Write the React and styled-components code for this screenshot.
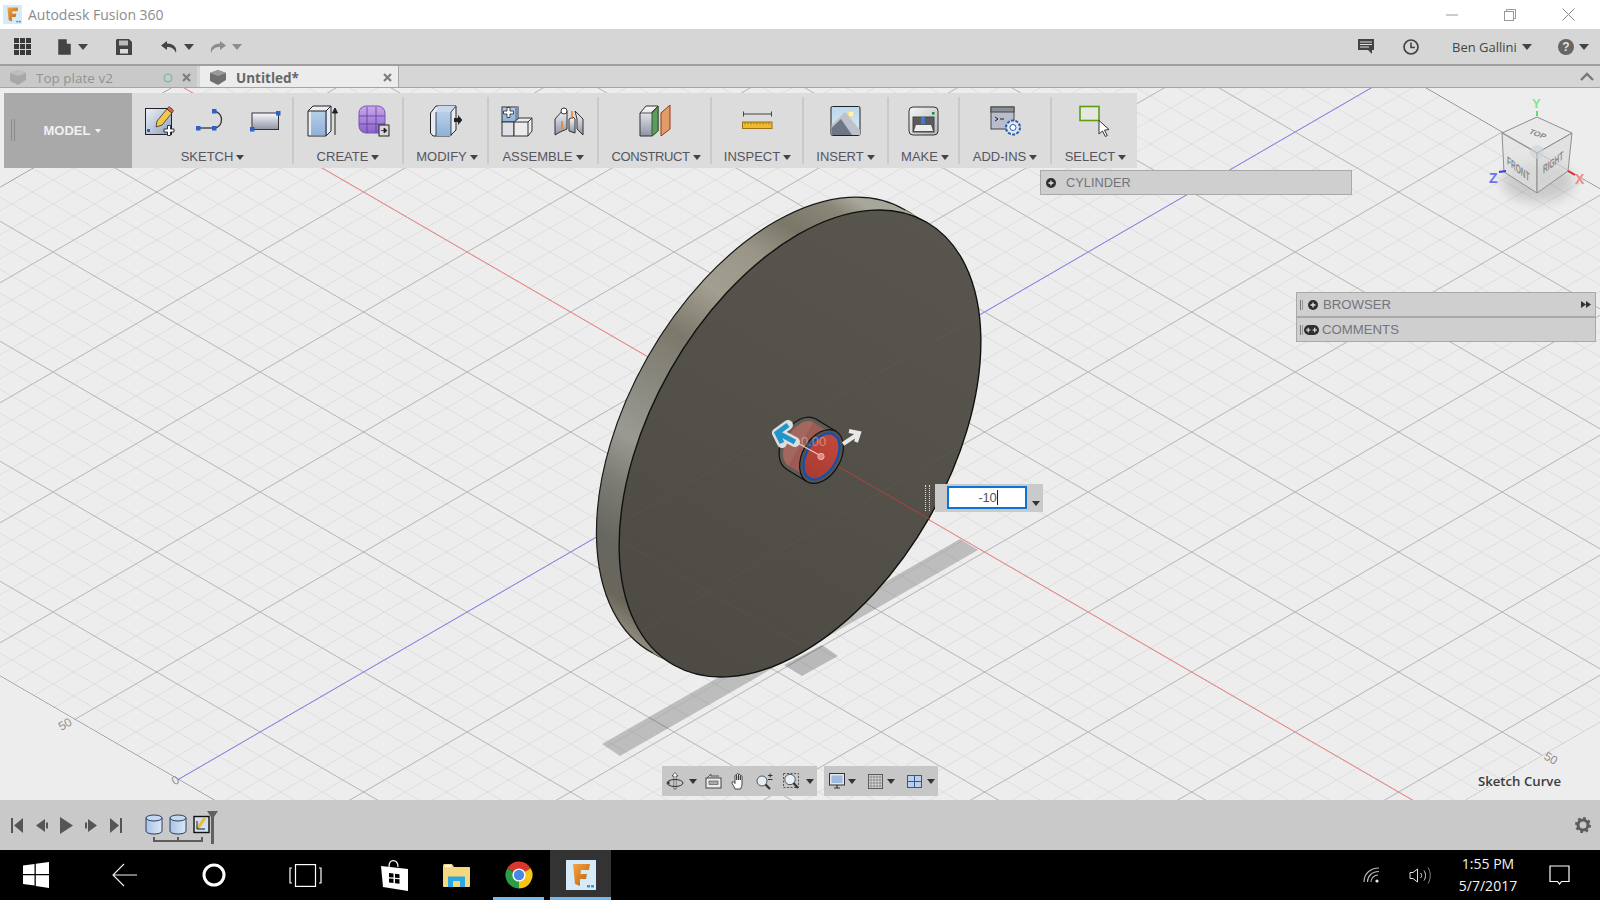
import React from "react";
import styled, { createGlobalStyle } from "styled-components";

const GlobalStyle = createGlobalStyle`
  html, body { margin: 0; padding: 0; background: #000; overflow: hidden; }
  #root { width: 1600px; height: 900px; }
`;

const UI_FONT = `"Open Sans", "Noto Sans", sans-serif`;
const ARIAL = `"Liberation Sans", Arial, sans-serif`;

const Page = styled.div`
  width: 1600px;
  height: 900px;
  display: flex;
  flex-direction: column;
  font-family: ${ARIAL};
`;

/* ---------- title bar ---------- */
const TitleBar = styled.div`
  height: 29px;
  background: #fff;
  display: flex;
  align-items: center;
  padding-left: 3px;
`;
const TitleText = styled.span`
  margin-left: 6px;
  font-family: ${UI_FONT};
  font-size: 14px;
  color: #8c8c8c;
`;
const WindowButtons = styled.div`
  margin-left: auto;
  display: flex;
  margin-right: 3px;
`;
const WindowButton = styled.div`
  width: 58px;
  height: 29px;
  display: flex;
  align-items: center;
  justify-content: center;
`;

/* ---------- menu bar ---------- */
const MenuBar = styled.div`
  height: 35px;
  background: #d6d6d6;
  border-bottom: 2px solid #9f9f9f;
  display: flex;
  align-items: center;
  padding-left: 14px;
`;
const MenuSlot = styled.div`
  display: flex;
  align-items: center;
  gap: ${(p) => p.$gap || 0}px;
  margin-left: ${(p) => p.$left || 0}px;
`;
const UserName = styled.span`
  font-family: ${UI_FONT};
  font-size: 13px;
  color: #444;
`;
const Caret = styled.span`
  display: inline-block;
  width: 0;
  height: 0;
  border-left: ${(p) => p.$size || 4}px solid transparent;
  border-right: ${(p) => p.$size || 4}px solid transparent;
  border-top: ${(p) => (p.$size || 4) + 1}px solid ${(p) => p.$color || "#444"};
`;

/* ---------- tabs ---------- */
const TabBar = styled.div`
  height: 22px;
  background: #d6d6d6;
  border-bottom: 1px solid #a5a5a5;
  box-sizing: border-box;
  display: flex;
  align-items: stretch;
`;
const Tab = styled.div`
  width: ${(p) => p.$width}px;
  margin-left: ${(p) => p.$left || 0}px;
  box-sizing: border-box;
  padding-left: 10px;
  padding-right: 6px;
  padding-top: 2px;
  display: flex;
  align-items: center;
  background: ${(p) => (p.$active ? "#ececec" : "#c9c9c9")};
  border-right: ${(p) => (p.$active ? "1px solid #a5a5a5" : "none")};
`;
const TabTitle = styled.span`
  margin-left: 10px;
  font-family: ${UI_FONT};
  font-size: 13.5px;
  font-weight: ${(p) => (p.$active ? 700 : 400)};
  color: ${(p) => (p.$active ? "#666" : "#929292")};
`;
const TabEnd = styled.div`
  margin-left: auto;
  display: flex;
  align-items: center;
  gap: 9px;
`;
const TabBarChevron = styled.div`
  margin-left: auto;
  width: 20px;
  display: flex;
  align-items: center;
`;

/* ---------- canvas + overlays ---------- */
const Canvas = styled.div`
  position: relative;
  height: 712px;
  background: #ededed;
  overflow: hidden;
`;
const Scene = styled.svg`
  display: block;
`;
const Ribbon = styled.div`
  position: absolute;
  left: 4px;
  top: 5px;
  height: 75px;
  display: flex;
  background: #dcdcdc;
`;
const ModelButton = styled.div`
  position: relative;
  width: 128px;
  background: #a9a9a9;
  display: flex;
  align-items: center;
  justify-content: center;
  gap: 5px;
  padding-left: 9px;
  box-sizing: border-box;
  font-size: 13px;
  font-weight: 700;
  color: #f1f1f1;
`;
const Grip = styled.span`
  position: absolute;
  left: 7px;
  top: 26px;
  width: 2px;
  height: 22px;
  border-left: 1px solid #8b8b8b;
  border-right: 1px solid #8b8b8b;
`;
const Group = styled.div`
  position: relative;
  width: ${(p) => p.$width}px;
  padding-top: 10px;
  box-sizing: border-box;
  display: flex;
  flex-direction: column;
  align-items: center;
  &::after {
    content: "";
    display: ${(p) => (p.$last ? "none" : "block")};
    position: absolute;
    right: -1px;
    top: 4px;
    bottom: 4px;
    width: 2px;
    background: #c9c9c9;
  }
`;
const GroupIcons = styled.div`
  height: 36px;
  display: flex;
  align-items: center;
  gap: ${(p) => p.$gap || 20}px;
  margin-bottom: 10px;
`;
const GroupLabel = styled.div`
  display: flex;
  align-items: center;
  gap: 3px;
  margin-left: ${(p) => p.$shift || 0}px;
  font-size: 13px;
  line-height: 16px;
  letter-spacing: ${(p) => (p.$tight ? "-0.4px" : "0")};
  color: #55555f;
`;
const PanelRow = styled.div`
  box-sizing: border-box;
  height: 25px;
  background: #cfcfcf;
  border: 1px solid #a9a9a9;
  display: flex;
  align-items: center;
  font-size: 13.2px;
  color: #74747c;
`;
const CylinderPanel = styled(PanelRow)`
  position: absolute;
  left: 1040px;
  top: 82px;
  width: 312px;
  padding-left: 5px;
  gap: 10px;
  font-size: 12.8px;
`;
const SidePanels = styled.div`
  position: absolute;
  left: 1296px;
  top: 204px;
  width: 300px;
  display: flex;
  flex-direction: column;
`;
const SideRow = styled(PanelRow)`
  padding-left: 2px;
  gap: ${(p) => p.$gap}px;
`;
const SideGrip = styled.span`
  width: 1px;
  height: 10px;
  margin-left: 1px;
  border-left: 1px solid #777;
  border-right: 1px solid #999;
`;
const DimensionBox = styled.div`
  position: absolute;
  left: 935px;
  top: 396px;
  width: 108px;
  height: 28px;
  box-sizing: border-box;
  padding: 2px 0 0 12px;
  background: #cacaca;
  display: flex;
  align-items: flex-start;
`;
const DimensionGrip = styled.div`
  position: absolute;
  left: 925px;
  top: 397px;
  width: 3px;
  height: 26px;
  border-left: 1px dotted #ddd;
  border-right: 1px dotted #ddd;
`;
const DimensionInput = styled.div`
  width: 80px;
  height: 23px;
  box-sizing: border-box;
  background: #fff;
  border: 2px solid #0b74d4;
  font-size: 13px;
  line-height: 19px;
  letter-spacing: -0.3px;
  color: #555;
  text-align: center;
  padding-left: 3px;
`;
const TextCaret = styled.span`
  display: inline-block;
  width: 1px;
  height: 15px;
  margin-left: 1px;
  vertical-align: -3px;
  background: #222;
`;
const DimensionCaret = styled.div`
  margin: 6px 0 0 5px;
`;
const NavStrip = styled.div`
  position: absolute;
  left: 662px;
  top: 678px;
  display: flex;
  gap: 7px;
`;
const NavGroup = styled.div`
  height: 30px;
  width: ${(p) => p.$width}px;
  background: #c7c7c7;
  display: flex;
  align-items: center;
`;
const NavItem = styled.div`
  display: flex;
  margin-left: ${(p) => p.$left}px;
`;
const HintText = styled.div`
  position: absolute;
  right: 39px;
  top: 684px;
  font-family: ${UI_FONT};
  font-size: 13.2px;
  font-weight: 600;
  color: #3c3c3c;
`;

/* ---------- timeline ---------- */
const Timeline = styled.div`
  height: 50px;
  background: #c9c9c9;
  display: flex;
  align-items: center;
  padding-left: 10px;
`;
const Transport = styled.div`
  display: flex;
  align-items: center;
  gap: 11px;
`;
const TimelineSteps = styled.svg`
  margin-left: 22px;
  flex: none;
`;
const TimelineGear = styled.div`
  margin-left: auto;
  margin-right: 9px;
  display: flex;
`;

/* ---------- taskbar ---------- */
const Taskbar = styled.div`
  height: 50px;
  background: #000;
  display: flex;
  align-items: stretch;
  color: #fff;
`;
const TaskButton = styled.div`
  width: ${(p) => p.$width}px;
  margin-left: ${(p) => p.$left || 0}px;
  box-sizing: border-box;
  display: flex;
  align-items: center;
  justify-content: center;
  background: ${(p) => (p.$active ? "#333" : "transparent")};
  border-bottom: ${(p) => (p.$open ? "3px solid #76b9ed" : "none")};
  padding-top: ${(p) => (p.$open ? "3px" : "0")};
`;
const Tray = styled.div`
  margin-left: auto;
  display: flex;
  align-items: center;
`;
const Clock = styled.div`
  width: 92px;
  margin-left: 11px;
  margin-right: 15px;
  font-family: ${UI_FONT};
  font-size: 14px;
  line-height: 22px;
  text-align: center;
  color: #f2f2f2;
`;

/* ---------- grid data ---------- */
const SLOPE = 60 / 103.5;
const RED_A = -18.76;
const BLUE_B = 882.8;
const range = (from, to, step) => {
  const out = [];
  for (let v = from; v <= to; v += step) out.push(v);
  return out;
};
const aMinor = range(RED_A - 720, 676, 24);
const bMinor = range(BLUE_B - 720, 1650, 24);
const aMajor = range(RED_A - 600, 676, 120);
const bMajor = range(BLUE_B - 600, 1650, 120);

const ALine = ({ a, ...rest }) => <line x1={0} y1={a} x2={1600} y2={a + SLOPE * 1600} {...rest} />;
const BLine = ({ b, ...rest }) => <line x1={0} y1={b} x2={1600} y2={b - SLOPE * 1600} {...rest} />;

/* ---------- shared gradients ---------- */
const DefsHolder = styled.svg`
  position: absolute;
  width: 0;
  height: 0;
`;
const SharedDefs = () => (
  <DefsHolder>
    <defs>
      <linearGradient id="gBlue" x1="0" y1="0" x2="0" y2="1">
        <stop offset="0" stopColor="#b9cfe8" />
        <stop offset="1" stopColor="#8fb1d9" />
      </linearGradient>
      <linearGradient id="gSteel" x1="0" y1="0" x2="0" y2="1">
        <stop offset="0" stopColor="#fbfbfd" />
        <stop offset="1" stopColor="#8d93a5" />
      </linearGradient>
      <linearGradient id="gGrey" x1="0" y1="0" x2="1" y2="1">
        <stop offset="0" stopColor="#f5f5f5" />
        <stop offset="1" stopColor="#b4b8c0" />
      </linearGradient>
      <linearGradient id="gPurple" x1="0" y1="0" x2="0" y2="1">
        <stop offset="0" stopColor="#c9a8ec" />
        <stop offset="1" stopColor="#8a62c8" />
      </linearGradient>
      <linearGradient id="gSketch" x1="0" y1="0" x2="1" y2="1">
        <stop offset="0" stopColor="#eef1f6" />
        <stop offset="1" stopColor="#8ea0bf" />
      </linearGradient>
      <linearGradient id="gPhoto" x1="0" y1="0" x2="0" y2="1">
        <stop offset="0" stopColor="#bcd8ee" />
        <stop offset="1" stopColor="#dce9f3" />
      </linearGradient>
      <linearGradient id="gFlame" x1="0" y1="0" x2="1" y2="1">
        <stop offset="0" stopColor="#f6a63f" />
        <stop offset="1" stopColor="#b85d13" />
      </linearGradient>
      <linearGradient id="gCyl" x1="0" y1="0" x2="1" y2="0">
        <stop offset="0" stopColor="#a9c4e6" />
        <stop offset="1" stopColor="#dbe8f6" />
      </linearGradient>
    </defs>
  </DefsHolder>
);

/* ---------- ribbon icons ---------- */
const SketchIcon = () => (
  <svg width="32" height="32" viewBox="0 0 32 32">
    <rect x="1.5" y="3.5" width="26" height="26" fill="url(#gSketch)" stroke="#222" />
    <rect x="3" y="24" width="3" height="3" fill="#2b62c4" />
    <polygon points="13,16 23,4 28,8 18,20 12,22" fill="#f4c74a" stroke="#333" strokeWidth="0.8" />
    <polygon points="23,4 25,1.5 29.5,5.5 28,8" fill="#e96a4b" stroke="#333" strokeWidth="0.8" />
    <path d="M20 24h3.5v-3.5h3V24H30v3h-3.5v3.5h-3V27H20z" fill="#fff" stroke="#222" strokeWidth="0.9" />
  </svg>
);
const LineIcon = () => (
  <svg width="34" height="24" viewBox="0 0 34 24">
    <path d="M2 19H18" stroke="#333" strokeWidth="1.3" />
    <path d="M18 2.5C28 2.5 28 19 18 19" fill="none" stroke="#333" strokeWidth="1.3" />
    <rect x="0" y="17" width="4.5" height="4.5" fill="#2b62c4" />
    <rect x="16" y="17" width="4.5" height="4.5" fill="#2b62c4" />
    <rect x="16" y="0" width="4.5" height="4.5" fill="#2b62c4" />
  </svg>
);
const RectIcon = () => (
  <svg width="31" height="22" viewBox="0 0 31 22">
    <rect x="2" y="3" width="26.5" height="16.5" fill="url(#gSteel)" stroke="#333" />
    <rect x="0" y="17" width="4.5" height="4.5" fill="#2b62c4" />
    <rect x="26" y="1" width="4.5" height="4.5" fill="#2b62c4" />
  </svg>
);
const ExtrudeIcon = () => (
  <svg width="32" height="32" viewBox="0 0 32 32">
    <polygon points="1,6 6,1 24,1 24,26 19,31 1,31" fill="#e9edf3" stroke="#222" />
    <rect x="4" y="6" width="16" height="24" fill="url(#gBlue)" />
    <path d="M19 31V6M19 6L24 1M1 6H19" stroke="#222" fill="none" />
    <path d="M28 30V4M25.5 8L28 3l2.5 5z" stroke="#222" fill="#222" />
  </svg>
);
const FormIcon = () => (
  <svg width="32" height="32" viewBox="0 0 32 32">
    <rect x="1" y="1" width="26" height="27" rx="7" fill="url(#gPurple)" stroke="#7a55b4" />
    <path d="M1 11H27M1 19H27M9 2V28M18 2V28" stroke="#5e3d99" fill="none" strokeWidth="0.8" />
    <rect x="21" y="20" width="10" height="11" fill="#d8d8d8" stroke="#222" />
    <path d="M23 25.5H27M26 23l3 2.5L26 28z" stroke="#222" fill="#222" strokeWidth="0.8" />
  </svg>
);
const ModifyIcon = () => (
  <svg width="32" height="32" viewBox="0 0 32 32">
    <polygon points="0.5,8 6,1 26,1 26,25 20,31 3,31 0.5,28" fill="#e8ecf2" stroke="#222" />
    <polygon points="6,7 22,7 26,1 8,1" fill="#c9d8ec" />
    <rect x="6" y="7" width="15" height="24" fill="url(#gBlue)" />
    <path d="M6 7V31M21 31V7L26 1" stroke="#222" fill="none" strokeWidth="0.8" />
    <path d="M24 13h4v-3l4.5 5-4.5 5v-3h-4z" fill="#222" />
  </svg>
);
const AssembleIcon = () => (
  <svg width="32" height="32" viewBox="0 0 32 32">
    <rect x="1" y="2" width="16" height="15" fill="url(#gBlue)" stroke="#333" />
    <polygon points="14,2 17,2 17,17 14,17" fill="#6e8fc0" />
    <rect x="1" y="17" width="12" height="14" fill="#dde1e6" stroke="#333" />
    <polygon points="13,31 13,17 18,13 31,13 31,26 27,31" fill="#ececec" stroke="#333" />
    <path d="M13 17H27V31M27 17L31 13" stroke="#333" fill="none" />
    <path d="M2.5 6h3.5v-3.5h3V6h3.5v3H9v3.5H6V9H2.5z" fill="#fff" stroke="#333" strokeWidth="0.9" />
  </svg>
);
const JointIcon = () => (
  <svg width="32" height="32" viewBox="0 0 32 32">
    <polygon points="2,14 11,4 14,6 14,24 7,27 2,30" fill="url(#gSteel)" stroke="#333" />
    <circle cx="11" cy="6" r="3" fill="#fff" stroke="#333" />
    <polygon points="16,14 20,12 22,14 22,28 16,26" fill="url(#gSteel)" stroke="#333" />
    <polygon points="22,6 30,14 30,30 24,24 24,14" fill="url(#gSteel)" stroke="#333" />
    <path d="M9 16V24M19 6V14" stroke="#e87a1c" strokeWidth="1.4" fill="none" />
  </svg>
);
const ConstructIcon = () => (
  <svg width="32" height="32" viewBox="0 0 32 32">
    <polygon points="1,8 7,1 19,1 19,26 13,31 1,31" fill="url(#gSteel)" stroke="#333" />
    <polygon points="13,31 13,7 19,1 19,26" fill="#5f9b5e" stroke="#2f5f2f" />
    <path d="M1 8H13L19 1" fill="none" stroke="#333" strokeWidth="0.8" />
    <polygon points="22,8 31,0 31,24 22,31" fill="#e59a69" stroke="#8f3a14" />
  </svg>
);
const RulerIcon = () => (
  <svg width="31" height="20" viewBox="0 0 31 20">
    <path d="M1.5 3H29.5M1.5 0.5V5.5M29.5 0.5V5.5" stroke="#444" fill="none" />
    <rect x="0.5" y="11" width="29.5" height="6.5" fill="#eeb92e" stroke="#9a7414" />
    <path d="M3 11v2.5M6 11v2M9 11v2.5M12 11v2M15 11v2.5M18 11v2M21 11v2.5M24 11v2M27 11v2.5" stroke="#8a6a10" strokeWidth="0.8" />
  </svg>
);
const ImageIcon = () => (
  <svg width="31" height="32" viewBox="0 0 31 32">
    <rect x="1" y="1.5" width="29" height="29" rx="1.5" fill="url(#gPhoto)" stroke="#222" />
    <circle cx="21" cy="9" r="3" fill="#fff3b8" stroke="#f4d88a" />
    <polygon points="1.5,20 15,7 30,25 30,30 1.5,30" fill="#bdc2ca" />
    <polygon points="1.5,23 11,14 22,30 1.5,30" fill="#6f7786" />
  </svg>
);
const MakeIcon = () => (
  <svg width="31" height="30" viewBox="0 0 31 30">
    <rect x="1" y="1" width="29" height="28" rx="4" fill="url(#gGrey)" stroke="#333" />
    <rect x="5" y="11" width="21" height="15" fill="#5b5b5b" stroke="#444" />
    <polygon points="8,19 23,19 25,25 6,25" fill="#eee" />
    <rect x="13" y="11" width="4" height="7" fill="#3f7ad0" />
    <rect x="24" y="6" width="2.5" height="2.5" fill="#0f8f2a" />
  </svg>
);
const AddInsIcon = () => (
  <svg width="31" height="30" viewBox="0 0 31 30">
    <rect x="1" y="1" width="23" height="22" fill="#b7bdcc" stroke="#444" />
    <rect x="1" y="1" width="23" height="5" fill="#8b8f98" stroke="#444" />
    <path d="M5 11l3 2-3 2M10 13h4" fill="none" stroke="#222" />
    <circle cx="23" cy="21.5" r="7" fill="#dbe7f6" stroke="#2c5da8" strokeWidth="2" strokeDasharray="3 1.4" />
    <circle cx="23" cy="21.5" r="3" fill="#fff" stroke="#2c5da8" />
  </svg>
);
const SelectIcon = () => (
  <svg width="30" height="32" viewBox="0 0 30 32">
    <rect x="1" y="1.5" width="19" height="14" fill="#e7e7e2" stroke="#5b9e14" strokeWidth="1.6" />
    <path d="M20 15.5V29l3.5-3 2.8 5.5 2-1-2.8-5.3 4.5-.7z" fill="#fff" stroke="#333" />
  </svg>
);

/* ---------- small toolbar icons ---------- */
const FusionLogo = ({ size = 19 }) => (
  <svg width={size} height={size} viewBox="0 0 30 30">
    <rect width="30" height="30" fill="#d5ecf8" />
    <polygon points="7,4 24,4 23,10 15,10 14.5,14 21,14 20,19 14,19 14,26 9,24" fill="url(#gFlame)" />
    <rect x="21" y="25" width="3" height="2.5" fill="#2f9bdc" />
    <rect x="25" y="25" width="3" height="2.5" fill="#2f9bdc" />
  </svg>
);
const AppsIcon = () => (
  <svg width="17" height="17" viewBox="0 0 17 17" fill="#3a3a3a">
    {[0, 6, 12].map((y) => [0, 6, 12].map((x) => <rect key={`${x}-${y}`} x={x} y={y} width="5" height="5" />))}
  </svg>
);
const FileIcon = () => (
  <svg width="14" height="16" viewBox="0 0 14 16">
    <path d="M0 0H8.5L13 4.5V16H0zM9 0.5V4.5H13" fill="#444" stroke="#d6d6d6" strokeWidth="0.5" />
  </svg>
);
const SaveIcon = () => (
  <svg width="16" height="16" viewBox="0 0 16 16">
    <path d="M1 0H13L16 3V16H0V1z" fill="#444" />
    <rect x="3" y="1.5" width="9" height="5" fill="#bbb" />
    <rect x="4" y="10" width="8" height="4.5" fill="#ddd" />
  </svg>
);
const UndoIcon = ({ color = "#444", flip }) => (
  <svg width="17" height="12" viewBox="0 0 17 12" style={flip ? { transform: "scaleX(-1)" } : undefined}>
    <path d="M6 0L0 4.5 6 9V6c4 0 7 1 9 6 1-6-2-9-9-9.5z" fill={color} />
  </svg>
);
const CommentIcon = () => (
  <svg width="16" height="16" viewBox="0 0 16 16">
    <path d="M0 0H16V11H14V15L10 11H0z" fill="#444" />
    <path d="M2 3H14M2 5.5H14M2 8H11" stroke="#ddd" />
  </svg>
);
const ClockIcon = () => (
  <svg width="16" height="16" viewBox="0 0 16 16">
    <circle cx="8" cy="8" r="7" fill="none" stroke="#444" strokeWidth="1.7" />
    <path d="M8 3.5V8.5H12" fill="none" stroke="#444" strokeWidth="1.6" />
  </svg>
);
const HelpGlyph = styled.span`
  width: 16px;
  height: 16px;
  border-radius: 50%;
  background: #666;
  color: #e2e2e2;
  font-size: 12px;
  font-weight: 700;
  line-height: 16px;
  text-align: center;
`;
const CubeTabIcon = ({ color = "#8c8c8c", top = "#b3b3b3" }) => (
  <svg width="16" height="15" viewBox="0 0 16 15">
    <polygon points="0,3 8,0 16,3 16,10 8,15 0,11" fill={color} />
    <polygon points="0,3 8,0 16,3 8,6" fill={top} />
  </svg>
);
const CloseX = () => (
  <svg width="9" height="9" viewBox="0 0 9 9">
    <path d="M1 1L8 8M8 1L1 8" stroke="#7d7d7d" strokeWidth="2.2" />
  </svg>
);
const PlusDot = () => (
  <svg width="10" height="10" viewBox="0 0 10 10">
    <circle cx="5" cy="5" r="5" fill="#2f2f2f" />
    <path d="M2.5 5H7.5M5 2.5V7.5" stroke="#e6e6e6" strokeWidth="1.3" />
  </svg>
);
const DoublePlus = styled(({ className }) => (
  <svg className={className} width="15" height="10" viewBox="0 0 15 10">
    <rect width="15" height="10" rx="5" fill="#2f2f2f" />
    <path d="M2 5H6.5M4.2 2.7V7.3M8.5 5H13M10.7 2.7V7.3" stroke="#e6e6e6" strokeWidth="1.2" />
  </svg>
))`
  margin-right: 2px;
`;
const ExpandArrows = styled.svg`
  margin-left: auto;
  margin-right: 4px;
`;

/* ---------- bottom navigation ---------- */
const OrbitIcon = () => (
  <svg width="18" height="18" viewBox="0 0 18 18">
    <path d="M9 0.5L6 4H8V17H10V4H12z" fill="#fff" stroke="#333" strokeWidth="0.7" />
    <ellipse cx="9" cy="11" rx="8" ry="3.5" fill="none" stroke="#333" />
    <path d="M1 11L3.5 8.5V13z" fill="#333" />
  </svg>
);
const LookIcon = () => (
  <svg width="17" height="16" viewBox="0 0 17 16">
    <rect x="1" y="5" width="15" height="10" fill="#ececec" stroke="#444" />
    <rect x="4" y="8" width="9" height="3.5" fill="#aaa" stroke="#444" strokeWidth="0.6" />
    <path d="M2 5L6 1V3H14" fill="none" stroke="#555" />
  </svg>
);
const HandIcon = () => (
  <svg width="17" height="17" viewBox="0 0 17 17">
    <path d="M4 16C3 13 1 11 1 9.5c0-1 1.5-1 2.3 0L4 10.5V3c0-1.2 1.7-1.2 1.7 0v4-5.5c0-1.3 1.8-1.3 1.8 0V7V2.2c0-1.2 1.8-1.2 1.8 0V7V3.5c0-1.2 1.7-1.2 1.7 0V11c0 2-1 3.5-1.5 5z" fill="#fff" stroke="#333" strokeWidth="0.9" />
  </svg>
);
const ZoomIcon = () => (
  <svg width="17" height="17" viewBox="0 0 17 17">
    <circle cx="6" cy="8" r="5" fill="#e2edf6" stroke="#555" />
    <path d="M9.5 11.5L14 16" stroke="#333" strokeWidth="2.2" />
    <path d="M12 2.5H16.5M14.2 .5V4.5M12 6.5H16.5" stroke="#333" />
  </svg>
);
const FitIcon = () => (
  <svg width="17" height="17" viewBox="0 0 17 17">
    <rect x="0.5" y="0.5" width="15" height="14" fill="none" stroke="#555" strokeDasharray="2 1.5" />
    <circle cx="7" cy="6.5" r="5.2" fill="#e8f1f8" stroke="#555" />
    <path d="M10.5 10L15 15" stroke="#333" strokeWidth="2.2" />
  </svg>
);
const DisplayIcon = () => (
  <svg width="16" height="16" viewBox="0 0 16 16">
    <rect x="0.5" y="0.5" width="15" height="11.5" fill="#dfe7f0" stroke="#333" />
    <rect x="2.5" y="2.5" width="11" height="7.5" fill="#9dbce0" />
    <path d="M5 15H11M8 12V15" stroke="#333" strokeWidth="1.2" />
  </svg>
);
const GridIcon = () => (
  <svg width="15" height="15" viewBox="0 0 15 15">
    <rect x="0.5" y="0.5" width="14" height="14" fill="#dcdcdc" stroke="#555" />
    <path d="M3 0V15M6 0V15M9 0V15M12 0V15M0 3H15M0 6H15M0 9H15M0 12H15" stroke="#777" strokeWidth="0.7" />
  </svg>
);
const ViewsIcon = () => (
  <svg width="15" height="13" viewBox="0 0 15 13">
    <rect x="0.5" y="0.5" width="14" height="12" fill="#bcd0ea" stroke="#2c5a9c" />
    <path d="M7.5 0V13M0 6.5H15" stroke="#2c5a9c" />
  </svg>
);

/* ---------- timeline icons ---------- */
const StartIcon = () => (
  <svg width="14" height="15" viewBox="0 0 14 15" fill="#555"><rect x="1" y="0" width="2" height="15" /><polygon points="13,0 13,15 4,7.5" /></svg>
);
const PrevIcon = () => (
  <svg width="14" height="15" viewBox="0 0 14 15" fill="#555"><polygon points="10,1 10,14 1,7.5" /><rect x="11" y="4.5" width="2" height="6" /></svg>
);
const PlayIcon = () => (
  <svg width="13" height="17" viewBox="0 0 13 17" fill="#555"><polygon points="0,0 13,8.5 0,17" /></svg>
);
const NextIcon = () => (
  <svg width="14" height="15" viewBox="0 0 14 15" fill="#555"><rect x="1" y="4.5" width="2" height="6" /><polygon points="4,1 4,14 13,7.5" /></svg>
);
const EndIcon = () => (
  <svg width="14" height="15" viewBox="0 0 14 15" fill="#555"><polygon points="1,0 1,15 10,7.5" /><rect x="11" y="0" width="2" height="15" /></svg>
);
const GearIcon = () => (
  <svg width="16" height="16" viewBox="0 0 16 16">
    <circle cx="8" cy="8" r="5" fill="none" stroke="#5c5c5c" strokeWidth="3" />
    <circle cx="8" cy="8" r="6.8" fill="none" stroke="#5c5c5c" strokeWidth="2.4" strokeDasharray="2.6 2.74" />
  </svg>
);
const CylinderStep = ({ x }) => (
  <g>
    <path d={`M${x} 14V27C${x} 31 ${x + 16} 31 ${x + 16} 27V14z`} fill="url(#gCyl)" stroke="#2c3d66" />
    <ellipse cx={x + 8} cy="14" rx="8" ry="3" fill="#c6d8ee" stroke="#2c3d66" />
  </g>
);

/* ---------- taskbar icons ---------- */
const WinLogo = () => (
  <svg width="26" height="26" viewBox="0 0 26 26" fill="#fff">
    <polygon points="0,3.5 11.5,2 11.5,12 0,12" />
    <polygon points="12.8,1.8 26,0 26,12 12.8,12" />
    <polygon points="0,13.3 11.5,13.3 11.5,23.5 0,22" />
    <polygon points="12.8,13.3 26,13.3 26,26 12.8,24" />
  </svg>
);
const TaskViewIcon = () => (
  <svg width="33" height="23" viewBox="0 0 33 23" fill="none" stroke="#fff" strokeWidth="1.2">
    <rect x="6.5" y="0.6" width="20" height="21.8" />
    <path d="M3 4H1V19H3M30 4H32V19H30" />
  </svg>
);
const StoreIcon = () => (
  <svg width="27" height="31" viewBox="0 0 27 31">
    <path d="M8 7C8 2 10 .7 12 .7S17 2 17 7" fill="none" stroke="#fff" strokeWidth="1.2" />
    <polygon points="0,6 27,9 27,31 2,27" fill="#fff" />
    <polygon points="8,13 12.5,13.5 12.5,17.5 8,17.2" fill="#000" />
    <polygon points="14,13.7 18.5,14.2 18.5,18 14,17.7" fill="#000" />
    <polygon points="8,18.5 12.5,18.8 12.5,23 8,22.5" fill="#000" />
    <polygon points="14,19 18.5,19.3 18.5,23.7 14,23.2" fill="#000" />
  </svg>
);
const FolderIcon = () => (
  <svg width="27" height="23" viewBox="0 0 27 23">
    <path d="M0 1.5C0 .7 .7 0 1.5 0H9l2 3h15c.6 0 1 .4 1 1v18c0 .6-.4 1-1 1H1c-.6 0-1-.4-1-1z" fill="#f5d77f" />
    <rect x="2" y="1.2" width="6" height="2" fill="#fff" />
    <path d="M5 23V12.5h17V23h-5v-6h-7v6z" fill="#2ca7df" />
  </svg>
);
const ChromeIcon = () => (
  <svg width="28" height="28" viewBox="0 0 28 28">
    <path d="M14 14L2.3 7.25A13.5 13.5 0 0 1 25.7 7.25Z" fill="#d8372b" />
    <path d="M14 14L25.7 7.25A13.5 13.5 0 0 1 14 27.5Z" fill="#f6c515" />
    <path d="M14 14L14 27.5A13.5 13.5 0 0 1 2.3 7.25Z" fill="#2c9b46" />
    <circle cx="14" cy="14" r="6.6" fill="#fff" />
    <circle cx="14" cy="14" r="5.2" fill="#4a86e8" />
  </svg>
);
const WifiIcon = () => (
  <svg width="18" height="16" viewBox="0 0 18 16" fill="none" stroke="#bdbdbd" strokeWidth="1.1">
    <path d="M1 15C1 7 7 1 16 1M4.5 15C4.5 9 9 4.5 16 4.5M8 15C8 11.5 11 8 15 8" />
    <circle cx="14" cy="14" r="1.6" fill="#e8e8e8" stroke="none" />
  </svg>
);
const VolumeIcon = () => (
  <svg width="22" height="17" viewBox="0 0 22 17" fill="none" stroke="#e0e0e0" strokeWidth="1">
    <path d="M1 5.5H4L8.5 2V15L4 11.5H1z" />
    <path d="M11.5 6C13 7.5 13 9.5 11.5 11M15 3.5C17 6.5 17 10.5 15 13.5" />
    <path d="M19 0.5C22 5 22 12 19 16.5" stroke="#888" />
  </svg>
);
const NoteIcon = () => (
  <svg width="21" height="20" viewBox="0 0 21 20" fill="none" stroke="#fff" strokeWidth="1.2">
    <path d="M1 1H20V16.5H12.5L10.5 19 8.5 16.5H1z" />
  </svg>
);

/* ---------- scene pieces ---------- */
const NavCube = () => (
  <g>
    <ellipse cx="1538" cy="182" rx="36" ry="20" fill="#000" opacity="0.14" filter="url(#soft)" />
    <polygon points="1537,117 1572,133 1537,153 1502,133" fill="#e6e6e6" fillOpacity="0.6" stroke="#8f8f8f" />
    <polygon points="1502,133 1537,153 1537,193 1504,172" fill="#e0e0e0" fillOpacity="0.65" stroke="#8f8f8f" />
    <polygon points="1572,133 1537,153 1537,193 1568,171" fill="#dadada" fillOpacity="0.65" stroke="#8f8f8f" />
    <circle cx="1537" cy="152" r="7" fill="#cfd3d8" opacity="0.6" />
    <text transform="matrix(.78 .3 -.5 .6 1528 133)" fontFamily={ARIAL} fontSize="10" fontWeight="700" fill="#8a8a8a">TOP</text>
    <text transform="matrix(.62 .5 0 1.15 1507 164)" fontFamily={ARIAL} fontSize="10.5" fontWeight="700" fill="#8a8a8a">FRONT</text>
    <text transform="matrix(.62 -.46 0 1.15 1543 174)" fontFamily={ARIAL} fontSize="10.5" fontWeight="700" fill="#8a8a8a">RIGHT</text>
    <path d="M1537 116V111" stroke="#63e06a" strokeWidth="2" />
    <text x="1532" y="108" fontFamily={ARIAL} fontSize="13" fontWeight="700" fill="#7fe88a">Y</text>
    <path d="M1499 172L1506 171" stroke="#3a3af0" strokeWidth="2" />
    <text x="1489" y="183" fontFamily={ARIAL} fontSize="14" fontWeight="700" fill="#6b72f0">Z</text>
    <path d="M1568 171L1575 175" stroke="#d92f2f" strokeWidth="2" />
    <text x="1575" y="184" fontFamily={ARIAL} fontSize="14" fontWeight="700" fill="#f28a8a">X</text>
  </g>
);

const Disc = () => (
  <g>
    <polygon points="602,744 620,756 978,550 960,539" fill="#000" opacity="0.2" />
    <polygon points="822,645 838,656 802,676 784,665" fill="#000" opacity="0.22" />
    {/* written as arcs, no transform, so the user-space rim gradient stays put */}
    <path d="M905.3 210A255 149 -60.3 1 0 652.7 653A255 149 -60.3 1 0 905.3 210Z" fill="url(#rim)" stroke="#1a1a1a" strokeWidth="1.2" />
    <polygon points="905.4,210 926.4,222 673.6,665 652.6,653" fill="url(#rim)" />
    <ellipse cx="800" cy="443.5" rx="255" ry="149" transform="rotate(-60.3 800 443.5)" fill="url(#face)" stroke="#111" strokeWidth="1.4" />
    <g clipPath="url(#discClip)" stroke="#fff" strokeOpacity="0.035">
      <ALine a={301} />
      <ALine a={181} />
      <BLine b={1003} />
      <BLine b={1123} />
      <BLine b={883} />
    </g>
  </g>
);

const Cylinder = () => (
  <g>
    <ellipse cx="801" cy="444" rx="29" ry="19" transform="rotate(-60.3 801 444)" fill="#5f5c56" stroke="#111" strokeWidth="1.2" />
    <polygon points="835.9,431.3 807.1,481.7 786.6,469.2 815.4,418.8" fill="#5f5c56" />
    <path d="M815.4 418.8L835.9 431.3M786.6 469.2L807.1 481.7" stroke="#111" strokeWidth="1.2" />
    <ellipse cx="801" cy="444" rx="25" ry="15" transform="rotate(-60.3 801 444)" fill="#a4675f" />
    <polygon points="813.5,422.5 833.9,434.7 809.2,478.2 788.5,465.7" fill="#9c5c55" />
    <ellipse cx="821.5" cy="456.5" rx="29" ry="19" transform="rotate(-60.3 821.5 456.5)" fill="#56534e" stroke="#111" strokeWidth="1.2" />
    <ellipse cx="821.5" cy="456.5" rx="25" ry="15" transform="rotate(-60.3 821.5 456.5)" fill="url(#red)" stroke="#1150b0" strokeWidth="2.2" />
    <path d="M792 440L821 456" stroke="#f0c9c4" strokeWidth="1.2" />
    <circle cx="821" cy="456.5" r="3.2" fill="#d98d84" stroke="#f2c8c2" strokeWidth="0.7" />
    <text x="801" y="446" fontFamily={ARIAL} fontSize="13" fill="#fff" fillOpacity="0.38">0.00</text>
    <path d="M843 444L858 434M849 431L859 433 856 442" fill="none" stroke="#e8e8e8" strokeWidth="4" />
    <path d="M795 442L778 433M788 425L777 433 782 443" fill="none" stroke="#dedede" strokeWidth="10" strokeLinejoin="round" strokeLinecap="round" />
    <path d="M795 442L778 433M788 425L777 433 782 443" fill="none" stroke="#1f95c8" strokeWidth="5" />
  </g>
);

const RIM_STOPS = [
  [0.0, "#a8a79c"], [0.064, "#a8a79c"], [0.097, "#8a8778"], [0.165, "#7a7668"], [0.233, "#9a9687"],
  [0.326, "#a39f90"], [0.423, "#7c786b"], [0.547, "#8e8d84"], [0.62, "#9a9a93"], [0.7, "#7b7a73"],
  [0.79, "#67665f"], [0.867, "#6a675c"], [0.914, "#8f8c7c"], [1, "#8b8879"],
];

const CanvasScene = () => (
  <Scene width="1600" height="712" viewBox="0 88 1600 712">
    <defs>
      <clipPath id="gridClip">
        <polygon points="798.7,-276 2060,455 840,1163 -421.8,431.5" />
      </clipPath>
      <clipPath id="discClip">
        <ellipse cx="800" cy="443.5" rx="255" ry="149" transform="rotate(-60.3 800 443.5)" />
      </clipPath>
      <filter id="soft" x="-30%" y="-60%" width="160%" height="220%">
        <feGaussianBlur stdDeviation="6" />
      </filter>
      <linearGradient id="rim" gradientUnits="userSpaceOnUse" x1="926" y1="200" x2="620" y2="690">
        {RIM_STOPS.map(([offset, color]) => <stop key={offset} offset={offset} stopColor={color} />)}
      </linearGradient>
      <linearGradient id="face" x1="0" y1="0" x2="1" y2="0">
        <stop offset="0" stopColor="#4e4b44" />
        <stop offset="1" stopColor="#58554e" />
      </linearGradient>
      <linearGradient id="red" x1="0" y1="0" x2="1" y2="0">
        <stop offset="0" stopColor="#a93b31" />
        <stop offset="1" stopColor="#c4483c" />
      </linearGradient>
    </defs>
    <g clipPath="url(#gridClip)" strokeWidth="1">
      {aMinor.map((a) => <ALine key={a} a={a} stroke="#dedede" />)}
      {bMinor.map((b) => <BLine key={b} b={b} stroke="#dedede" />)}
      {aMajor.map((a) => <ALine key={a} a={a} stroke="#b9b9b9" />)}
      {bMajor.map((b) => <BLine key={b} b={b} stroke="#b9b9b9" />)}
      <ALine a={RED_A} stroke="#f58686" />
      <BLine b={BLUE_B} stroke="#8585f5" />
      <ALine a={-739} stroke="#6b6b6b" />
      <ALine a={676} stroke="#6b6b6b" />
      <BLine b={187} stroke="#6b6b6b" />
      <BLine b={1650} stroke="#6b6b6b" />
    </g>
    <text transform="rotate(-30 67 723)" x="58" y="727" fontFamily={ARIAL} fontSize="12" fill="#8f8f8f">50</text>
    <text transform="rotate(-30 176 780)" x="172" y="784" fontFamily={ARIAL} fontSize="12" fill="#8f8f8f">0</text>
    <text transform="rotate(30 1552 759)" x="1544" y="763" fontFamily={ARIAL} fontSize="12" fill="#8f8f8f">50</text>
    <Disc />
    <path d="M821 456.5L930 519.5" stroke="#b4403a" strokeWidth="1" />
    <Cylinder />
    <NavCube />
  </Scene>
);

const RIBBON = [
  { label: "SKETCH", width: 161, gap: 20, icons: [SketchIcon, LineIcon, RectIcon] },
  { label: "CREATE", width: 110, gap: 19, icons: [ExtrudeIcon, FormIcon] },
  { label: "MODIFY", width: 85, shift: 3, icons: [ModifyIcon] },
  { label: "ASSEMBLE", width: 110, icons: [AssembleIcon, JointIcon] },
  { label: "CONSTRUCT", width: 113, tight: true, shift: 3, icons: [ConstructIcon] },
  { label: "INSPECT", width: 92, shift: 1, icons: [RulerIcon] },
  { label: "INSERT", width: 85, icons: [ImageIcon] },
  { label: "MAKE", width: 71, shift: 3, icons: [MakeIcon] },
  { label: "ADD-INS", width: 92, icons: [AddInsIcon] },
  { label: "SELECT", width: 86, shift: 3, icons: [SelectIcon], last: true },
];

export default function App() {
  return (
    <Page>
      <GlobalStyle />
      <SharedDefs />
      <TitleBar>
        <FusionLogo />
        <TitleText>Autodesk Fusion 360</TitleText>
        <WindowButtons>
          <WindowButton>
            <svg width="12" height="2"><path d="M0 1H12" stroke="#999" /></svg>
          </WindowButton>
          <WindowButton>
            <svg width="12" height="12" fill="none" stroke="#999"><path d="M2.5 2.5V.5H11.5V9.5H9.5" /><rect x=".5" y="2.5" width="9" height="9" /></svg>
          </WindowButton>
          <WindowButton>
            <svg width="13" height="13" stroke="#888"><path d="M.5 .5L12.5 12.5M12.5 .5L.5 12.5" /></svg>
          </WindowButton>
        </WindowButtons>
      </TitleBar>

      <MenuBar>
        <AppsIcon />
        <MenuSlot $left={27} $gap={6}><FileIcon /><Caret $size={5} /></MenuSlot>
        <MenuSlot $left={28}><SaveIcon /></MenuSlot>
        <MenuSlot $left={29} $gap={6}><UndoIcon /><Caret $size={5} /></MenuSlot>
        <MenuSlot $left={15} $gap={6}><UndoIcon color="#8d8d8d" flip /><Caret $size={5} $color="#8d8d8d" /></MenuSlot>
        <MenuSlot $left={1116}><CommentIcon /></MenuSlot>
        <MenuSlot $left={29}><ClockIcon /></MenuSlot>
        <MenuSlot $left={33} $gap={5}><UserName>Ben Gallini</UserName><Caret $size={5} /></MenuSlot>
        <MenuSlot $left={26} $gap={5}><HelpGlyph>?</HelpGlyph><Caret $size={5} /></MenuSlot>
      </MenuBar>

      <TabBar>
        <Tab $width={197}>
          <CubeTabIcon color="#a8a8a8" top="#bdbdbd" />
          <TabTitle>Top plate v2</TabTitle>
          <TabEnd>
            <svg width="10" height="10"><circle cx="5" cy="5" r="3.8" fill="none" stroke="#6fbfa5" strokeWidth="1.3" /></svg>
            <CloseX />
          </TabEnd>
        </Tab>
        <Tab $width={199} $left={3} $active>
          <CubeTabIcon color="#707070" top="#9a9a9a" />
          <TabTitle $active>Untitled*</TabTitle>
          <TabEnd><CloseX /></TabEnd>
        </Tab>
        <TabBarChevron>
          <svg width="14" height="9"><path d="M1 8L7 2L13 8" fill="none" stroke="#777" strokeWidth="2.4" /></svg>
        </TabBarChevron>
      </TabBar>

      <Canvas>
        <CanvasScene />
        <Ribbon>
          <ModelButton>
            <Grip />
            MODEL
            <Caret $size={3.5} $color="#f1f1f1" />
          </ModelButton>
          {RIBBON.map((group) => (
            <Group key={group.label} $width={group.width} $last={group.last}>
              <GroupIcons $gap={group.gap}>
                {group.icons.map((Icon, i) => <Icon key={i} />)}
              </GroupIcons>
              <GroupLabel $tight={group.tight} $shift={group.shift}>{group.label}<Caret /></GroupLabel>
            </Group>
          ))}
        </Ribbon>

        <CylinderPanel>
          <PlusDot />
          CYLINDER
        </CylinderPanel>

        <SidePanels>
          <SideRow $gap={5}>
            <SideGrip />
            <PlusDot />
            BROWSER
            <ExpandArrows width="10" height="7" viewBox="0 0 10 7" fill="#333">
              <polygon points="0,0 5,3.5 0,7" />
              <polygon points="5,0 10,3.5 5,7" />
            </ExpandArrows>
          </SideRow>
          <SideRow $gap={1}>
            <SideGrip />
            <DoublePlus />
            COMMENTS
          </SideRow>
        </SidePanels>

        <DimensionGrip />
        <DimensionBox>
          <DimensionInput>-10<TextCaret /></DimensionInput>
          <DimensionCaret><Caret $color="#333" /></DimensionCaret>
        </DimensionBox>

        <NavStrip>
          <NavGroup $width={155}>
            <NavItem $left={4}><OrbitIcon /></NavItem>
            <NavItem $left={5}><Caret $color="#333" /></NavItem>
            <NavItem $left={8}><LookIcon /></NavItem>
            <NavItem $left={9}><HandIcon /></NavItem>
            <NavItem $left={8}><ZoomIcon /></NavItem>
            <NavItem $left={10}><FitIcon /></NavItem>
            <NavItem $left={6}><Caret $color="#333" /></NavItem>
          </NavGroup>
          <NavGroup $width={114}>
            <NavItem $left={5}><DisplayIcon /></NavItem>
            <NavItem $left={3}><Caret $color="#333" /></NavItem>
            <NavItem $left={12}><GridIcon /></NavItem>
            <NavItem $left={4}><Caret $color="#333" /></NavItem>
            <NavItem $left={12}><ViewsIcon /></NavItem>
            <NavItem $left={5}><Caret $color="#333" /></NavItem>
          </NavGroup>
        </NavStrip>

        <HintText>Sketch Curve</HintText>
      </Canvas>

      <Timeline>
        <Transport>
          <StartIcon /><PrevIcon /><PlayIcon /><NextIcon /><EndIcon />
        </Transport>
        <TimelineSteps width="80" height="42" viewBox="0 0 80 42">
          <CylinderStep x={1} />
          <CylinderStep x={25} />
          <rect x="49" y="12.5" width="15" height="16" fill="#cfe0f2" stroke="#111" strokeWidth="1.4" />
          <path d="M52 25L60 14" stroke="#e9b93a" strokeWidth="3" />
          <path d="M52 17V25H60" stroke="#123" fill="none" />
          <path d="M9 33V37H57V33M33 33V37" fill="none" stroke="#5d5d5d" strokeWidth="2" />
          <path d="M62 7H73L69 13V40H66V13z" fill="#606060" />
        </TimelineSteps>
        <TimelineGear><GearIcon /></TimelineGear>
      </Timeline>

      <Taskbar>
        <TaskButton $width={71}><WinLogo /></TaskButton>
        <TaskButton $width={107}>
          <svg width="26" height="24" fill="none" stroke="#f2f2f2" strokeWidth="1.1"><path d="M25 12H1M12 1L1 12L12 23" /></svg>
        </TaskButton>
        <TaskButton $width={72}>
          <svg width="24" height="24" fill="none" stroke="#fff" strokeWidth="3"><circle cx="12" cy="12" r="10" /></svg>
        </TaskButton>
        <TaskButton $width={110}><TaskViewIcon /></TaskButton>
        <TaskButton $width={68}><StoreIcon /></TaskButton>
        <TaskButton $width={57}><FolderIcon /></TaskButton>
        <TaskButton $width={51} $left={8} $open><ChromeIcon /></TaskButton>
        <TaskButton $width={61} $left={6} $open $active><FusionLogo size={30} /></TaskButton>
        <Tray>
          <WifiIcon />
          <MenuSlot $left={28}><VolumeIcon /></MenuSlot>
          <Clock>
            1:55 PM
            <br />
            5/7/2017
          </Clock>
          <NoteIcon />
          <MenuSlot $left={30} />
        </Tray>
      </Taskbar>
    </Page>
  );
}
